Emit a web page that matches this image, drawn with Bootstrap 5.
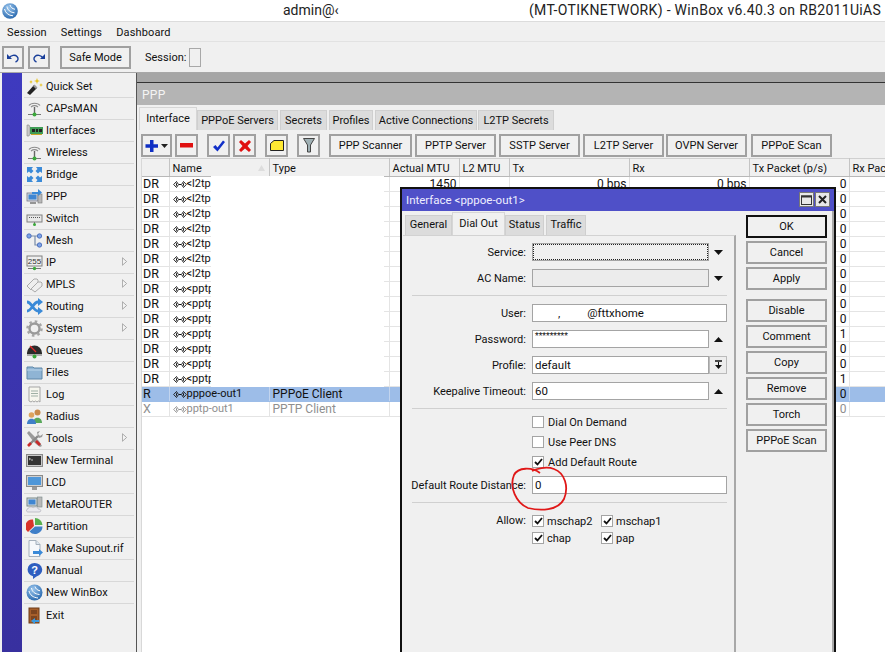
<!DOCTYPE html>
<html lang="en">
<head>
<meta charset="utf-8">
<title>WinBox</title>
<link href="https://cdn.jsdelivr.net/npm/bootstrap@5.3.0/dist/css/bootstrap.min.css" rel="stylesheet">
<style>
html,body{height:652px;overflow:hidden}
body{width:885px;background:#f0f0f0;font-family:Roboto,"Liberation Sans",sans-serif;font-size:11px;line-height:15px;color:#111}
svg{display:block;flex:none}
.wb-title{height:22px;background:#fff;border-bottom:1px solid #dcdcdc;position:relative}
.wb-logo{margin:3px 0 0 2px}
.wb-user{margin-left:265px;font-size:14px;line-height:21px;color:#222;width:246px;white-space:nowrap}
.wb-caption{font-size:14px;line-height:21px;color:#222;white-space:nowrap;letter-spacing:.32px}
.wb-menu{height:20px;padding-left:7px;gap:14px;font-size:11px;letter-spacing:.15px;line-height:21px;border-bottom:1px solid #e2e2e2}
.wb-tools{height:31px;padding:4px 0 0 2px;border-bottom:1px solid #a8a8a8;align-items:flex-start}
.wb-btn{--bs-btn-padding-x:0;--bs-btn-padding-y:0;--bs-btn-font-size:11px;--bs-btn-line-height:19px;--bs-btn-color:#111;--bs-btn-bg:#f0f0f0;--bs-btn-border-color:#a0a0a0;--bs-btn-hover-bg:#f0f0f0;--bs-btn-hover-border-color:#a0a0a0;border-radius:0;height:23px;border-width:2px;display:flex;align-items:center;justify-content:center;flex:none}
.wb-undo{width:22px;margin-right:4px}
.wb-safe{width:71px;margin-left:6px;margin-right:14px}
.wb-session{margin-right:3px;line-height:23px}
.wb-sbox{width:12px;height:19px;border:1px solid #a8a8a8;margin-top:2px;background:#f0f0f0}
.wb-body{height:579px}
.wb-strip{width:22px;padding-left:2px;background:#f0f0f0;flex:none}
.wb-strip i{display:block;width:20px;height:100%;background:linear-gradient(#3e3abf,#38309f)}
.wb-side{width:112px;flex:none;padding-top:3px;--bs-list-group-bg:transparent;--bs-list-group-border-width:0;--bs-list-group-item-padding-x:0;--bs-list-group-item-padding-y:0;border-radius:0}
.wb-side .list-group-item{height:22px;margin:0 0 0 2px;width:110px;border-bottom:1px solid #d8d8d8;display:flex;align-items:center;gap:3px;padding:0 0 0 2px;color:#111;font-size:11px;position:relative}
.wb-side .list-group-item svg.ico{width:17px;height:17px}
.wb-arrow{position:absolute;right:7px;top:5px;width:5px;height:9px}
.wb-desk{flex:1;position:relative;margin-left:2px;border-left:1px solid #555;background:#a6a6a6;padding-top:9px;overflow:hidden}
.wb-ppp{border-top:1px solid #333;background:#f0f0f0;height:570px;display:flex;flex-direction:column}
.wb-ptitle{height:22px;background:#b4b4b4;color:#f4f4f4;padding-left:5px;line-height:25px;font-size:12px;flex:none;letter-spacing:.3px}
.wb-tabs{--bs-nav-tabs-border-width:0;--bs-nav-link-padding-x:0;--bs-nav-link-padding-y:0;--bs-nav-link-font-size:11px;--bs-nav-link-color:#111;--bs-nav-link-hover-color:#111;--bs-nav-tabs-link-active-bg:#f0f0f0;--bs-nav-tabs-link-active-color:#111;flex-wrap:nowrap;align-items:flex-end;border:0}
.wb-tabs .nav-link{height:20px;line-height:19px;background:#dcdcdc;border:1px solid #cfcfcf;border-bottom:0;border-radius:0;text-align:center;margin:0 1px 0 0;white-space:nowrap}
.wb-tabs .nav-link.active{height:23px;line-height:22px;background:#f0f0f0;border:1px solid #d6d6d6;border-bottom:0;margin-right:0}
.wb-ptabs{margin:2px 0 0 2px;height:23px;flex:none}
.wb-ptabs li:nth-child(1) a{width:58px}.wb-ptabs li:nth-child(2) a{width:81px}.wb-ptabs li:nth-child(3) a{width:47px;margin-left:1px}.wb-ptabs li:nth-child(4) a{width:44px;margin-left:1px}.wb-ptabs li:nth-child(5) a{width:102px;margin-left:1px}.wb-ptabs li:nth-child(6) a{width:76px}
.wb-pbar{padding:4px 0 0 4px;height:30px;flex:none}
.wb-ib{width:23px}
.wb-ib1{width:31px;margin-right:3px}
.wb-g3{margin-right:9px}
.wb-g1{margin-right:3px}
.wb-tb{width:81px;margin-right:3px}
.wb-tb0{width:83px}
.wb-tb2{margin-right:2px}
.wb-tb4{margin-right:4px}
.wb-tw{margin-left:4px;margin-top:-2px;flex:1;position:relative;background:#fff;overflow:hidden;border-left:1px solid #d8d8d8}
.wb-grid{table-layout:fixed;width:743px;margin:0;border-collapse:collapse;--bs-table-bg:transparent;--bs-table-border-color:#e4e4e4;--bs-table-color:#111;font-size:12px;line-height:14px}
.wb-grid th,.wb-grid td{padding:0 2px 0 3px;height:15px;border:0;border-right:1px solid #e4e4e4;border-bottom:1px solid #e4e4e4;font-weight:400;white-space:nowrap;overflow:hidden;box-shadow:none}
.wb-grid th{height:18px;font-size:11px;background:#f0f0f0;border-right:1px solid #c4c4c4;border-bottom:1px solid #b8b8b8;border-top:1px solid #d0d0d0;position:relative}
.wb-grid td:first-child{padding-left:1px;font-size:12.5px}
.wb-num{text-align:right}
.wb-sel td{background:#9dbde8;border-right-color:#c2d4ee;border-bottom-color:#9dbde8}
.wb-off td{color:#8f8f8f}
.wb-nm{display:flex;align-items:center;font-size:11px;color:#111}
.wb-off .wb-nm{color:#8f8f8f}
.wb-pt{width:14px;height:7px}
.wb-mask{position:absolute;left:69px;top:18px;width:173px;height:211px;background:#fff}
.wb-sort{position:absolute;right:4px;top:6px;width:7px;height:6px}
.wb-dlg{position:absolute;left:263px;top:114px;width:436px;height:480px;background:#f0f0f0;border:2px solid #111;border-bottom:0;color:#111}
.wb-dt{height:22px;background:#4f50c8;color:#eef;padding-left:4px;line-height:22px;font-size:11.5px;position:relative}
.wb-wbtn{position:absolute;top:3px;width:15px;height:15px;background:#e8e8e8;border:1px solid #777}
.wb-wmax{right:20px}
.wb-wcl{right:4px}
.wb-dmain{display:flex;height:440px}
.wb-dleft{width:333px;margin-left:1px;flex:none}
.wb-dtabs{margin:1px 0 0 2px;height:23px}
.wb-dtabs .nav-link{line-height:18px}
.wb-dtabs li:nth-child(1) a{width:47px;margin-right:0}.wb-dtabs li:nth-child(2) a{width:53px;margin-right:1px}.wb-dtabs li:nth-child(3) a{width:39px;margin-right:2px}.wb-dtabs li:nth-child(4) a{width:40px}
.wb-panel{border-top:1px solid #d2d2d2;border-right:2px solid #a8a8a8;height:420px;padding:7px 0 0 0}
.wb-fr{display:flex;align-items:center;height:18px;margin-bottom:8px}
.wb-lb{width:123px;text-align:right;flex:none;margin-right:6px;white-space:nowrap}
.wb-in{width:177px;height:18px;min-height:18px;padding:0 2px;border:1px solid #a4a4a4;border-radius:0;font-size:11.5px;line-height:16px;color:#111;background:#fff;flex:none;box-shadow:none}
.wb-ro{background:#ececec}
.wb-wide{width:195px}
.wb-focus{outline:1px dotted #222;outline-offset:-2px;background:#f0f0f0}
.wb-arr{width:18px;display:flex;justify-content:center;align-items:center;height:18px;flex:none}
.wb-sb{width:18px;height:18px;border:1px solid #bbb;background:#eee;display:flex;justify-content:center;align-items:center;flex:none}
.wb-stars{font-size:8.5px;line-height:11px}
.wb-tick{margin:0 27px 0 23px}
.wb-hr{border:0;border-top:1px solid #d0d0d0;opacity:1;margin:0 0 8px 9px;width:315px}
.wb-hr3{margin-bottom:7px}
.wb-hr2{margin-bottom:12px}
.wb-ck{display:flex;align-items:center;height:12px;margin:0 0 8px 129px;gap:4px;line-height:15px;white-space:nowrap}
.wb-box{width:12px;height:12px;border:1px solid #a4a4a4;background:#fff;flex:none;display:flex;align-items:center;justify-content:center}
.wb-cks{margin:0;width:69px;gap:3px}
.wb-allow{display:grid;grid-template-columns:129px 69px 69px;row-gap:5px}
.wb-allow .wb-lb{line-height:12px}
.wb-dright{width:81px;margin-left:10px;padding-top:4px;display:flex;flex-direction:column;gap:3px}
.wb-dright .wb-btn{width:81px}
.wb-dright .wb-ok{--bs-btn-border-color:#111;--bs-btn-hover-border-color:#111}
.wb-dright .wb-sp{margin-bottom:6px}
.wb-rline{position:absolute;right:0;top:22px;bottom:0;width:2px;background:#a8a8a8}
.wb-ring{position:absolute;left:510px;top:465px;width:62px;height:50px;pointer-events:none}
</style>
</head>
<body>
<svg width="0" height="0" class="position-absolute"><defs>
<radialGradient id="gl" cx=".4" cy=".3" r=".8"><stop offset="0" stop-color="#9cc7ee"/><stop offset="1" stop-color="#1d5fa8"/></radialGradient>
<symbol id="pt" viewBox="0 0 14 7"><path d="M3.500.500L.700 3.500l2.800 3 2-3zM10.500.500l-2 3 2 3 2.800-3z" fill="none" stroke="currentColor" stroke-width=".9"/><path d="M3.500 2.300v2.400M10.500 2.300v2.400M6 3.500h2" stroke="currentColor" stroke-width="1"/></symbol>
<symbol id="ant" viewBox="0 0 17 17"><path d="M3 5.500C5 2.500 12 2.500 14 5.500M5 7c2-1.500 5-1.500 7 0" fill="none" stroke="#8d8d8d" stroke-width="1.200"/><path d="M8.500 7v7" stroke="#666" stroke-width="1.400"/><path d="M2 14.500h13" stroke="#777"/><circle cx="8.500" cy="14.500" r="2" fill="#3ba93b"/></symbol>
<symbol id="sub" viewBox="0 0 6 10"><path d="M.5.500L5.500 5 .5 9.500z" fill="#f4f4f4" stroke="#9a9a9a"/></symbol>
<symbol id="chk" viewBox="0 0 9 8"><path d="M1 4l2.500 2.500L8 1" fill="none" stroke="#111" stroke-width="1.800"/></symbol>
</defs></svg>
<header class="wb-title d-flex">
<svg class="wb-logo" width="16" height="16" viewBox="0 0 16 16"><circle cx="8" cy="8" r="7.800" fill="url(#gl)"/><path d="M2.500 6c1 4 4 6.500 8.500 6.800M5 3.500c.6 3.500 3 5.800 7.500 6.300M8 2c.5 2 2 3.700 5 4.300" fill="none" stroke="#fff" stroke-width="1"/></svg>
<div class="wb-user">admin@‹</div>
<div class="wb-caption">(MT-OTIKNETWORK) - WinBox v6.40.3 on RB2011UiAS</div>
</header>
<nav class="wb-menu d-flex"><span>Session</span><span>Settings</span><span>Dashboard</span></nav>
<div class="wb-tools d-flex">
<button class="btn wb-btn wb-undo" aria-label="Undo"><svg width="14" height="12" viewBox="0 0 14 12"><path d="M1 2v5h5z" fill="#1a3f9a"/><path d="M3 6c2-3 6-3.500 8-1.500s1 4.500-1.500 5.500" fill="none" stroke="#1a3f9a" stroke-width="1.400"/></svg></button>
<button class="btn wb-btn wb-undo" aria-label="Redo"><svg width="14" height="12" viewBox="0 0 14 12"><path d="M13 2v5H8z" fill="#1a3f9a"/><path d="M11 6C9 3 5 2.500 3 4.500S2 9 4.500 10" fill="none" stroke="#1a3f9a" stroke-width="1.400"/></svg></button>
<button class="btn wb-btn wb-safe">Safe Mode</button>
<span class="wb-session">Session:</span><div class="wb-sbox"></div>
</div>
<div class="wb-body d-flex">
<div class="wb-strip"><i></i></div>
<div class="list-group list-group-flush wb-side">
<a class="list-group-item"><svg class="ico" viewBox="0 0 17 17"><path d="M1 15l7-8 3 3-7 7z" fill="#222"/><path d="M7 8l3 3 1.500-1.500-3-3z" fill="#999"/><path d="M11 0l.8 2.200L14 3l-2.200.8L11 6l-.8-2.200L8 3l2.200-.8zM15 5l.5 1.500L17 7l-1.500.5L15 9l-.5-1.500L13 7l1.500-.5zM5 2l.5 1.200L6.700 4l-1.200.4L5 6l-.5-1.600L3.300 4l1.200-.8z" fill="#e7c21c"/></svg>Quick Set</a>
<a class="list-group-item"><svg class="ico"><use href="#ant"/></svg>CAPsMAN</a>
<a class="list-group-item"><svg class="ico" viewBox="0 0 17 17"><path d="M1 3h2l1 2v7l-1 2H1z" fill="#c9c9c9" stroke="#888" stroke-width=".6"/><rect x="4" y="5" width="13" height="7" fill="#3e9b54"/><rect x="6" y="7" width="3" height="3" fill="#222"/><rect x="10" y="7" width="2" height="3" fill="#222"/><rect x="13" y="7" width="3" height="3" fill="#222"/><path d="M5 12.500h11" stroke="#c9a528"/></svg>Interfaces</a>
<a class="list-group-item"><svg class="ico"><use href="#ant"/></svg>Wireless</a>
<a class="list-group-item"><svg class="ico" viewBox="0 0 17 17"><g fill="#3a8ad8"><path d="M1 1h6L5.500 3 7.500 5 5 7.500l-2-2L1 7z"/><path d="M16 1h-6l1.500 2L9.500 5 12 7.500l2-2 2 1.500z"/><path d="M1 16h6l-1.500-2 2-2L5 9.500l-2 2L1 10z"/><path d="M16 16h-6l1.500-2-2-2 2.500-2.500 2 2 2-1.500z"/></g></svg>Bridge</a>
<a class="list-group-item"><svg class="ico" viewBox="0 0 17 17"><rect x="1" y="5" width="11" height="8" fill="#cfd8e2" stroke="#778" stroke-width=".8"/><rect x="2.500" y="6.500" width="8" height="5" fill="#3f86d2"/><path d="M4 15h6" stroke="#777" stroke-width="1.500"/><rect x="12" y="6" width="4" height="9" fill="#b9b9b9" stroke="#777" stroke-width=".6"/><path d="M6 4h6V1l4 3.500L12 8V6H6z" fill="#3a8ad8"/></svg>PPP</a>
<a class="list-group-item"><svg class="ico" viewBox="0 0 17 17"><rect x="1" y="5" width="15" height="7" fill="#e8e8e8" stroke="#808080"/><path d="M3 7.500h1M5 7.500h1M7 7.500h1M9 7.500h1M11 7.500h1M13 7.500h1" stroke="#555"/><path d="M8.500 12v3" stroke="#777"/><circle cx="8.500" cy="14.500" r="1.500" fill="#3ba93b"/></svg>Switch</a>
<a class="list-group-item"><svg class="ico" viewBox="0 0 17 17"><path d="M3 4h11M9 4v9h5" fill="none" stroke="#7a8da8" stroke-width="1.200"/><circle cx="3" cy="4" r="2.200" fill="#7fa4e6" stroke="#3d62b5" stroke-width=".8"/><circle cx="13.500" cy="4" r="2.200" fill="#7fa4e6" stroke="#3d62b5" stroke-width=".8"/><circle cx="13.500" cy="13" r="2.200" fill="#7fa4e6" stroke="#3d62b5" stroke-width=".8"/></svg>Mesh</a>
<a class="list-group-item"><svg class="ico" viewBox="0 0 17 17"><rect x="1" y="2" width="15" height="10" fill="#efefef" stroke="#808080"/><text x="8.500" y="10" text-anchor="middle" font-size="8" font-family="Liberation Sans" fill="#333">255</text><path d="M2 14.500h13" stroke="#777"/><circle cx="8.500" cy="14.500" r="1.700" fill="#3ba93b"/></svg>IP<svg class="wb-arrow"><use href="#sub"/></svg></a>
<a class="list-group-item"><svg class="ico" viewBox="0 0 17 17"><path d="M1 10l7-7h3l1 1v3l-7 7z" fill="#eee" stroke="#aaa"/><path d="M5 13l7-7h3l1 1v3l-7 6z" fill="#eee" stroke="#aaa"/></svg>MPLS<svg class="wb-arrow"><use href="#sub"/></svg></a>
<a class="list-group-item"><svg class="ico" viewBox="0 0 17 17"><path d="M1 4c5 0 6 9 11 9M1 13c5 0 6-9 11-9" fill="none" stroke="#3a8ad8" stroke-width="2.800"/><path d="M12 0l5 4-5 4zM12 9l5 4-5 4z" fill="#3a8ad8"/></svg>Routing<svg class="wb-arrow"><use href="#sub"/></svg></a>
<a class="list-group-item"><svg class="ico" viewBox="0 0 17 17"><circle cx="8.500" cy="8.500" r="5" fill="none" stroke="#9a9a9a" stroke-width="2.400"/><circle cx="8.500" cy="8.500" r="7" fill="none" stroke="#a5a5a5" stroke-width="2.500" stroke-dasharray="2.500 3"/><circle cx="8.500" cy="8.500" r="2" fill="#efefef"/></svg>System<svg class="wb-arrow"><use href="#sub"/></svg></a>
<a class="list-group-item"><svg class="ico" viewBox="0 0 17 17"><path d="M1 11a7.500 7.500 0 0 1 15 0v1H1z" fill="#2b2b2b"/><path d="M4 4l6 6" stroke="#e02828" stroke-width="1.200"/><path d="M1 13h15" stroke="#666"/><circle cx="8.500" cy="14.500" r="2" fill="#3ba93b"/></svg>Queues</a>
<a class="list-group-item"><svg class="ico" viewBox="0 0 17 17"><path d="M1 3h6l1 1h8v11H1z" fill="#8fb4d4" stroke="#5e87a8"/><path d="M1 6h15" stroke="#bcd5ea"/></svg>Files</a>
<a class="list-group-item"><svg class="ico" viewBox="0 0 17 17"><path d="M3 1h11v15l-1.500-1-1.500 1-1.500-1-1.500 1-1.500-1-1.500 1L3 15z" fill="#f6f6ee" stroke="#a5a5a5"/><path d="M5 5h7M5 7.500h7M5 10h7" stroke="#9fb0a5"/></svg>Log</a>
<a class="list-group-item"><svg class="ico" viewBox="0 0 17 17"><circle cx="11.500" cy="4.500" r="3" fill="#c98a4a"/><path d="M7 15c0-7 9-7 9 0z" fill="#58a85a"/><circle cx="5.500" cy="7" r="2.800" fill="#dda35e"/><path d="M1 16c0-7 9-7 9 0z" fill="#3f7fc8"/></svg>Radius</a>
<a class="list-group-item"><svg class="ico" viewBox="0 0 17 17"><path d="M1 3l2-2 7 7 3 3 3 5-2 1-4-3-3-3z" fill="#9a9a9a"/><path d="M10 11l4 4" stroke="#c92a2a" stroke-width="2.600"/><path d="M3 15l9-9" stroke="#8a8a8a" stroke-width="2.400"/><path d="M11 2l3-1-2 3 2 2 3-2-1 3-3 1-1-1z" fill="#9a9a9a"/><path d="M2 16l3-3" stroke="#c92a2a" stroke-width="2.600"/></svg>Tools<svg class="wb-arrow"><use href="#sub"/></svg></a>
<a class="list-group-item"><svg class="ico" viewBox="0 0 17 17"><rect x=".5" y="2.500" width="16" height="12" fill="#c9c9c9" stroke="#8a8a8a"/><rect x="2" y="4" width="13" height="9" fill="#333"/><path d="M3 6l1.500 1L3 8M5 8h2" stroke="#ddd" stroke-width=".8" fill="none"/></svg>New Terminal</a>
<a class="list-group-item"><svg class="ico" viewBox="0 0 17 17"><rect x=".5" y="1.500" width="16" height="11" fill="#cfcfcf" stroke="#8a8a8a"/><rect x="2" y="3" width="13" height="8" fill="#4f97d9"/><rect x="6" y="13" width="5" height="3" fill="#9a9a9a"/></svg>LCD</a>
<a class="list-group-item"><svg class="ico" viewBox="0 0 17 17"><rect x="1" y="2" width="10" height="8" fill="#d5dbe2" stroke="#788"/><rect x="2.500" y="3.500" width="7" height="5" fill="#3f86d2"/><rect x="11.500" y="1" width="4.500" height="10" fill="#b9b9b9" stroke="#788" stroke-width=".6"/><path d="M2 16c-2 0-2-3 0-3 0-2 4-3 5-1 2-2 5-1 5 1 3-.5 4 3 1 3z" fill="#e9e9ee" stroke="#a5a5b0" stroke-width=".6"/></svg>MetaROUTER</a>
<a class="list-group-item"><svg class="ico" viewBox="0 0 17 17"><path d="M8 8L7 1.500A7 7 0 0 0 2 14z" fill="#d9342b"/><path d="M9 7V0a7.500 7.500 0 0 1 7.500 7z" fill="#58b04f"/><path d="M9 8.500h7.500a7.500 7.500 0 0 1-13 5z" fill="#3f7fc8"/></svg>Partition</a>
<a class="list-group-item"><svg class="ico" viewBox="0 0 17 17"><path d="M3 .5h7l4 4v12H3z" fill="#f6f8fb" stroke="#a5b0bc"/><path d="M10 .5v4h4" fill="#dde6ef" stroke="#a5b0bc"/><path d="M7 11h6V9l4 3.500-4 3.500v-2H7z" fill="#3a8ad8"/></svg>Make Supout.rif</a>
<a class="list-group-item"><svg class="ico" viewBox="0 0 17 17"><path d="M8.500 1a7.500 6.800 0 0 1 2 13.400L7 17v-2.700A7.500 6.800 0 0 1 8.500 1z" fill="#2f5fc0"/><text x="8.500" y="12" text-anchor="middle" font-size="11" font-weight="700" font-family="Liberation Sans" fill="#fff">?</text></svg>Manual</a>
<a class="list-group-item"><svg class="ico" viewBox="0 0 17 17"><circle cx="8.500" cy="8.500" r="8" fill="url(#gl)"/><path d="M3 7c1 4 4 6.500 9 7M5.500 4c.6 3.500 3 6 8 6.500M9 2.500c.5 2 2 3.700 5 4.300" fill="none" stroke="#fff"/></svg>New WinBox</a>
<a class="list-group-item"><svg class="ico" viewBox="0 0 17 17"><rect x="3" y="1" width="10" height="15" fill="#a65f2b" stroke="#6e3c18"/><rect x="5" y="3" width="6" height="4" fill="#7c4520"/><rect x="5" y="9" width="6" height="4" fill="#7c4520"/><path d="M13 13H9v-2l-4 3 4 3v-2h4z" fill="#3a9ae0"/></svg>Exit</a>
</div>
<main class="wb-desk">
<section class="wb-ppp">
<div class="wb-ptitle">PPP</div>
<ul class="nav nav-tabs wb-tabs wb-ptabs">
<li class="nav-item"><a class="nav-link active">Interface</a></li>
<li class="nav-item"><a class="nav-link">PPPoE Servers</a></li>
<li class="nav-item"><a class="nav-link">Secrets</a></li>
<li class="nav-item"><a class="nav-link">Profiles</a></li>
<li class="nav-item"><a class="nav-link">Active Connections</a></li>
<li class="nav-item"><a class="nav-link">L2TP Secrets</a></li>
</ul>
<div class="wb-pbar d-flex">
<button class="btn wb-btn wb-ib1" aria-label="Add"><svg width="24" height="14" viewBox="0 0 24 14"><path d="M5 1h3.500v4.300H13v3.400H8.500V13H5V8.700H.500V5.300H5z" fill="#0f2fc4"/><path d="M16 5h7l-3.500 4z" fill="#222"/></svg></button>
<button class="btn wb-btn wb-ib wb-g3" aria-label="Remove"><svg width="13" height="5" viewBox="0 0 13 5"><rect width="13" height="4.500" fill="#e01010"/></svg></button>
<button class="btn wb-btn wb-ib wb-g1" aria-label="Enable"><svg width="13" height="12" viewBox="0 0 13 12"><path d="M1 7l2.500-2 2 2.500L11 .5 13 2 5.500 11.500z" fill="#1230c8"/></svg></button>
<button class="btn wb-btn wb-ib wb-g3" aria-label="Disable"><svg width="12" height="12" viewBox="0 0 12 12"><path d="M0 2l2-2 4 3.500L10 0l2 2-3.500 4L12 10l-2 2-4-3.500L2 12l-2-2 3.500-4z" fill="#e01010"/></svg></button>
<button class="btn wb-btn wb-ib wb-g3" aria-label="Comment"><svg width="14" height="11" viewBox="0 0 14 11"><path d="M.5 3.500L4 .5h9.500v10H.5z" fill="#ffe933" stroke="#222"/></svg></button>
<button class="btn wb-btn wb-ib wb-g3" aria-label="Filter"><svg width="12" height="15" viewBox="0 0 12 15"><path d="M.5.500h11L7.500 7v7h-3V7z" fill="#9fb0b4" stroke="#444"/></svg></button>
<button class="btn wb-btn wb-tb wb-tb0">PPP Scanner</button>
<button class="btn wb-btn wb-tb">PPTP Server</button>
<button class="btn wb-btn wb-tb">SSTP Server</button>
<button class="btn wb-btn wb-tb wb-tb2">L2TP Server</button>
<button class="btn wb-btn wb-tb wb-tb4">OVPN Server</button>
<button class="btn wb-btn wb-tb">PPPoE Scan</button>
</div>
<div class="wb-tw">
<table class="table wb-grid">
<colgroup><col width="27"><col width="100"><col width="120"><col width="70"><col width="50"><col width="120"><col width="120"><col width="100"><col width="36"></colgroup>
<thead><tr><th></th><th>Name<svg class="wb-sort" viewBox="0 0 7 6"><path d="M3.500 0L7 6H0z" fill="#ddd"/></svg></th><th>Type</th><th>Actual MTU</th><th>L2 MTU</th><th>Tx</th><th>Rx</th><th>Tx Packet (p/s)</th><th>Rx Pac</th></tr></thead>
<tbody>
<tr><td>DR</td><td><span class="wb-nm"><svg class="wb-pt"><use href="#pt"/></svg>&lt;l2tp</span></td><td></td><td class="wb-num">1450</td><td></td><td class="wb-num">0 bps</td><td class="wb-num">0 bps</td><td class="wb-num">0</td><td></td></tr>
<tr><td>DR</td><td><span class="wb-nm"><svg class="wb-pt"><use href="#pt"/></svg>&lt;l2tp</span></td><td></td><td></td><td></td><td></td><td></td><td class="wb-num">0</td><td></td></tr>
<tr><td>DR</td><td><span class="wb-nm"><svg class="wb-pt"><use href="#pt"/></svg>&lt;l2tp</span></td><td></td><td></td><td></td><td></td><td></td><td class="wb-num">0</td><td></td></tr>
<tr><td>DR</td><td><span class="wb-nm"><svg class="wb-pt"><use href="#pt"/></svg>&lt;l2tp</span></td><td></td><td></td><td></td><td></td><td></td><td class="wb-num">0</td><td></td></tr>
<tr><td>DR</td><td><span class="wb-nm"><svg class="wb-pt"><use href="#pt"/></svg>&lt;l2tp</span></td><td></td><td></td><td></td><td></td><td></td><td class="wb-num">0</td><td></td></tr>
<tr><td>DR</td><td><span class="wb-nm"><svg class="wb-pt"><use href="#pt"/></svg>&lt;l2tp</span></td><td></td><td></td><td></td><td></td><td></td><td class="wb-num">0</td><td></td></tr>
<tr><td>DR</td><td><span class="wb-nm"><svg class="wb-pt"><use href="#pt"/></svg>&lt;l2tp</span></td><td></td><td></td><td></td><td></td><td></td><td class="wb-num">0</td><td></td></tr>
<tr><td>DR</td><td><span class="wb-nm"><svg class="wb-pt"><use href="#pt"/></svg>&lt;pptp</span></td><td></td><td></td><td></td><td></td><td></td><td class="wb-num">0</td><td></td></tr>
<tr><td>DR</td><td><span class="wb-nm"><svg class="wb-pt"><use href="#pt"/></svg>&lt;pptp</span></td><td></td><td></td><td></td><td></td><td></td><td class="wb-num">0</td><td></td></tr>
<tr><td>DR</td><td><span class="wb-nm"><svg class="wb-pt"><use href="#pt"/></svg>&lt;pptp</span></td><td></td><td></td><td></td><td></td><td></td><td class="wb-num">0</td><td></td></tr>
<tr><td>DR</td><td><span class="wb-nm"><svg class="wb-pt"><use href="#pt"/></svg>&lt;pptp</span></td><td></td><td></td><td></td><td></td><td></td><td class="wb-num">1</td><td></td></tr>
<tr><td>DR</td><td><span class="wb-nm"><svg class="wb-pt"><use href="#pt"/></svg>&lt;pptp</span></td><td></td><td></td><td></td><td></td><td></td><td class="wb-num">0</td><td></td></tr>
<tr><td>DR</td><td><span class="wb-nm"><svg class="wb-pt"><use href="#pt"/></svg>&lt;pptp</span></td><td></td><td></td><td></td><td></td><td></td><td class="wb-num">0</td><td></td></tr>
<tr><td>DR</td><td><span class="wb-nm"><svg class="wb-pt"><use href="#pt"/></svg>&lt;pptp</span></td><td></td><td></td><td></td><td></td><td></td><td class="wb-num">1</td><td></td></tr>
<tr class="wb-sel"><td>R</td><td><span class="wb-nm"><svg class="wb-pt"><use href="#pt"/></svg>pppoe-out1</span></td><td>PPPoE Client</td><td></td><td></td><td></td><td></td><td class="wb-num">0</td><td></td></tr>
<tr class="wb-off"><td>X</td><td><span class="wb-nm"><svg class="wb-pt"><use href="#pt"/></svg>pptp-out1</span></td><td>PPTP Client</td><td></td><td></td><td></td><td></td><td class="wb-num">0</td><td></td></tr>
</tbody>
</table>
<div class="wb-mask"></div>
</div>
</section>
<section class="wb-dlg">
<div class="wb-dt">Interface &lt;pppoe-out1&gt;
<span class="wb-wbtn d-flex align-items-center justify-content-center wb-wmax"><svg width="11" height="10" viewBox="0 0 11 10"><rect x=".5" y="1" width="10" height="8.500" fill="none" stroke="#333"/><path d="M0 1.500h11" stroke="#333" stroke-width="2"/></svg></span>
<span class="wb-wbtn d-flex align-items-center justify-content-center wb-wcl"><svg width="9" height="9" viewBox="0 0 9 9"><path d="M1 1l7 7M8 1L1 8" stroke="#222" stroke-width="2"/></svg></span>
</div>
<div class="wb-dmain">
<div class="wb-dleft">
<ul class="nav nav-tabs wb-tabs wb-dtabs">
<li class="nav-item"><a class="nav-link">General</a></li>
<li class="nav-item"><a class="nav-link active">Dial Out</a></li>
<li class="nav-item"><a class="nav-link">Status</a></li>
<li class="nav-item"><a class="nav-link">Traffic</a></li>
</ul>
<div class="wb-panel">
<div class="wb-fr"><span class="wb-lb">Service:</span><div class="form-control wb-in wb-ro wb-focus"></div><span class="wb-arr"><svg width="9" height="5" viewBox="0 0 9 5"><path d="M0 0h9L4.500 5z" fill="#111"/></svg></span></div>
<div class="wb-fr"><span class="wb-lb">AC Name:</span><div class="form-control wb-in wb-ro"></div><span class="wb-arr"><svg width="9" height="5" viewBox="0 0 9 5"><path d="M0 0h9L4.500 5z" fill="#111"/></svg></span></div>
<hr class="wb-hr">
<div class="wb-fr"><span class="wb-lb">User:</span><div class="form-control wb-in wb-wide"><span class="wb-tick">,</span>@fttxhome</div></div>
<div class="wb-fr"><span class="wb-lb">Password:</span><div class="form-control wb-in wb-stars">*********</div><span class="wb-arr"><svg width="9" height="5" viewBox="0 0 9 5"><path d="M0 5h9L4.500 0z" fill="#111"/></svg></span></div>
<div class="wb-fr"><span class="wb-lb">Profile:</span><div class="form-control wb-in">default</div><span class="wb-sb"><svg width="9" height="10" viewBox="0 0 9 10"><path d="M1 1h7" stroke="#111" stroke-width="1.500"/><path d="M4 2h1v3h3L4.500 9 1 5h3z" fill="#111"/></svg></span></div>
<div class="wb-fr"><span class="wb-lb">Keepalive Timeout:</span><div class="form-control wb-in">60</div><span class="wb-arr"><svg width="9" height="5" viewBox="0 0 9 5"><path d="M0 5h9L4.500 0z" fill="#111"/></svg></span></div>
<hr class="wb-hr wb-hr3">
<div class="wb-ck"><span class="wb-box"></span>Dial On Demand</div>
<div class="wb-ck"><span class="wb-box"></span>Use Peer DNS</div>
<div class="wb-ck"><span class="wb-box"><svg width="9" height="8"><use href="#chk"/></svg></span>Add Default Route</div>
<div class="wb-fr"><span class="wb-lb">Default Route Distance:</span><div class="form-control wb-in wb-wide">0</div></div>
<hr class="wb-hr wb-hr2">
<div class="wb-allow">
<span class="wb-lb">Allow:</span>
<div class="wb-ck wb-cks"><span class="wb-box"><svg width="9" height="8"><use href="#chk"/></svg></span>mschap2</div>
<div class="wb-ck wb-cks"><span class="wb-box"><svg width="9" height="8"><use href="#chk"/></svg></span>mschap1</div>
<span></span>
<div class="wb-ck wb-cks"><span class="wb-box"><svg width="9" height="8"><use href="#chk"/></svg></span>chap</div>
<div class="wb-ck wb-cks"><span class="wb-box"><svg width="9" height="8"><use href="#chk"/></svg></span>pap</div>
</div>
</div>
</div>
<div class="wb-dright">
<button class="btn wb-btn wb-ok">OK</button>
<button class="btn wb-btn">Cancel</button>
<button class="btn wb-btn wb-sp">Apply</button>
<button class="btn wb-btn">Disable</button>
<button class="btn wb-btn">Comment</button>
<button class="btn wb-btn">Copy</button>
<button class="btn wb-btn">Remove</button>
<button class="btn wb-btn">Torch</button>
<button class="btn wb-btn">PPPoE Scan</button>
</div>
</div>
<div class="wb-rline"></div>
</section>
</main>
</div>
<svg class="wb-ring" viewBox="0 0 62 50"><path d="M30 8C22 2 8 2 4 10-1 22 6 38 18 43c12 3 30 3 36-9 5-12 1-26-10-30C36 1 26 4 22 6" fill="none" stroke="#e01818" stroke-width="1.800"/></svg>
</body>
</html>
